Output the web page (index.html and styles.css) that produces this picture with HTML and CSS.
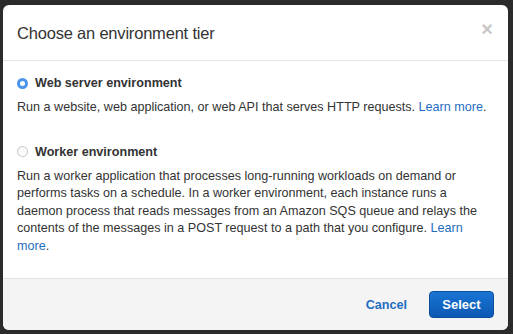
FILE: index.html
```html
<!DOCTYPE html>
<html lang="en">
<head>
  <meta charset="UTF-8">
  <title>Choose an environment tier</title>
  <link rel="stylesheet" href="styles.css">
</head>
<body>
<div class="modal">
  <div class="modal-header">
    <h4 class="modal-title">Choose an environment tier</h4>
    <span class="close">&times;</span>
  </div>
  <div class="modal-body">
    <div class="option">
      <label class="option-label">
        <span class="radio radio-checked"></span>Web server environment
      </label>
      <p class="option-desc">Run a website, web application, or web API that serves HTTP requests. <a href="#">Learn more</a>.</p>
    </div>
    <div class="option">
      <label class="option-label">
        <span class="radio"></span>Worker environment
      </label>
      <p class="option-desc">Run a worker application that processes long-running workloads on demand or performs tasks on a schedule. In a worker environment, each instance runs a daemon process that reads messages from an Amazon SQS queue and relays the contents of the messages in a POST request to a path that you configure. <a href="#">Learn more</a>.</p>
    </div>
  </div>
  <div class="modal-footer">
    <a href="#" class="btn-link">Cancel</a>
    <button class="btn-primary">Select</button>
  </div>
</div>
</body>
</html>
```

FILE: styles.css
```css
*{
  margin: 0;
  padding: 0;
  box-sizing: border-box;
}
body{
  background-color: #2b2b2b;
  padding: 5px 5px 4px 3px;
  font-family: "Liberation Sans", Arial, sans-serif;
  font-size: 12.6px;
  color: #333;
}
a{
  color: #1f6dc2;
  text-decoration: none;
}
.modal{
  width: 505px;
  height: 325px;
  background-color: #fff;
  border-radius: 6px;
  overflow: hidden;
  display: flex;
  flex-direction: column;
}
.modal-header{
  height: 56px;
  padding: 0 14px;
  border-bottom: 1px solid #e5e5e5;
  display: flex;
  align-items: center;
  justify-content: space-between;
}
.modal-title{
  font-size: 16.5px;
  letter-spacing: -0.2px;
  font-weight: normal;
  color: #333;
  padding-top: 2px;
}
.close{
  font-size: 20px;
  font-weight: bold;
  color: #c8c8c8;
  margin-top: -6px;
  margin-right: 1px;
}
.modal-body{
  flex: 1;
  padding: 13px 14px 0 14px;
}
.option + .option{
  margin-top: 26px;
}
.option-label{
  display: flex;
  align-items: center;
  height: 18px;
  font-weight: bold;
  color: #333;
}
.radio{
  width: 11px;
  height: 11px;
  border-radius: 50%;
  border: 1px solid #c4c4c4;
  background: linear-gradient(#fafafa, #fff);
  margin-right: 7px;
}
.radio-checked{
  border: 3.5px solid #4a94ec;
  background: #fff;
}
.option-desc{
  margin-top: 7px;
  line-height: 17.6px;
}
.modal-footer{
  height: 52px;
  background-color: #f4f4f4;
  border-top: 1px solid #e3e3e3;
  display: flex;
  align-items: center;
  justify-content: flex-end;
  gap: 22px;
  padding: 0 14px;
}
.btn-link{
  font-weight: bold;
  color: #1f6dc2;
}
.btn-primary{
  width: 65px;
  height: 27px;
  border: 1px solid #0a4f9e;
  border-radius: 4px;
  background: linear-gradient(#1a74d4, #0b58b3);
  color: #fff;
  font-family: inherit;
  font-size: 13px;
  font-weight: bold;
}
```
